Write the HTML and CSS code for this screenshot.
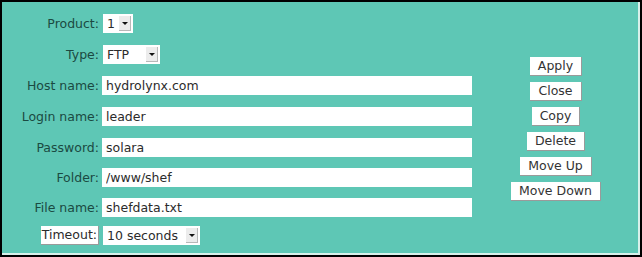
FILE: index.html
```html
<!DOCTYPE html>
<html lang="en">
<head>
    <meta charset="UTF-8">
    <title>Transfer settings</title>
    <link rel="stylesheet" href="styles.css">
</head>
<body>
    <div class="frame">
        <form class="fields">
            <label class="name">Product:</label>
            <span class="select product"><span class="val">1</span><span class="arrow"></span></span>

            <label class="name">Type:</label>
            <span class="select type"><span class="val">FTP</span><span class="arrow"></span></span>

            <label class="name">Host name:</label>
            <input class="text" type="text" value="hydrolynx.com">

            <label class="name">Login name:</label>
            <input class="text" type="text" value="leader">

            <label class="name">Password:</label>
            <input class="text" type="text" value="solara">

            <label class="name">Folder:</label>
            <input class="text" type="text" value="/www/shef">

            <label class="name">File name:</label>
            <input class="text" type="text" value="shefdata.txt">

            <button type="button" class="btn timeout">Timeout:</button>
            <span class="select wait"><span class="val">10 seconds</span><span class="arrow"></span></span>
        </form>

        <div class="actions">
            <button type="button" class="btn">Apply</button>
            <button type="button" class="btn">Close</button>
            <button type="button" class="btn">Copy</button>
            <button type="button" class="btn">Delete</button>
            <button type="button" class="btn">Move Up</button>
            <button type="button" class="btn">Move Down</button>
        </div>
    </div>
</body>
</html>
```

FILE: styles.css
```css
* {
    padding: 0;
    margin: 0;
    box-sizing: border-box;
}

body {
    font-family: "DejaVu Sans", sans-serif;
    font-size: 12.5px;
    background-color: #fff;
}

.frame {
    width: 642px;
    height: 257px;
    border: 2px solid #000;
    background-color: #5ec7b5;
    box-shadow: inset -2px -2px 0 #d8f0ea;
    display: flex;
}

.fields {
    display: grid;
    grid-template-columns: 97px 370px;
    grid-template-rows: 31px 31px 31px 31px 30px 30px 28px auto;
    column-gap: 3px;
    padding-top: 12px;
    align-items: start;
}

.name {
    height: 19px;
    line-height: 19px;
    text-align: right;
    color: #1b4a42;
}

.text {
    width: 370px;
    height: 19px;
    border: none;
    padding: 0 4px;
    font-family: inherit;
    font-size: 12.5px;
    color: #2b2b2b;
    background-color: #fff;
    outline: none;
}

.select {
    display: flex;
    height: 19px;
    background-color: #fff;
    color: #2b2b2b;
    line-height: 19px;
    justify-self: start;
}
.select .val {
    flex: 1;
    padding-left: 4px;
}
.select .arrow {
    position: relative;
    width: 12px;
    margin: 2px 2px 2px 0;
    background-color: #ececec;
    border-right: 1px solid #b8b8b8;
    border-bottom: 1px solid #b8b8b8;
}
.select .arrow::after {
    content: "";
    position: absolute;
    left: 3px;
    top: 6px;
    border-left: 3px solid transparent;
    border-right: 3px solid transparent;
    border-top: 3px solid #111;
}
.product { width: 30px; margin-left: 1px; }
.type { width: 57px; margin-left: 1px; }
.wait { width: 97px; margin-left: 1px; }

.btn {
    height: 19px;
    padding: 0 8px;
    border: none;
    border-right: 1px solid #9a9a9a;
    border-bottom: 1px solid #9a9a9a;
    background-color: #fff;
    font-family: inherit;
    font-size: 12.5px;
    line-height: 18px;
    color: #333;
}

.timeout {
    justify-self: end;
    padding: 0 1px;
    color: #2b2b2b;
}

.actions {
    flex: 1;
    display: flex;
    flex-direction: column;
    align-items: center;
    gap: 6px;
    padding-top: 55px;
}
```
